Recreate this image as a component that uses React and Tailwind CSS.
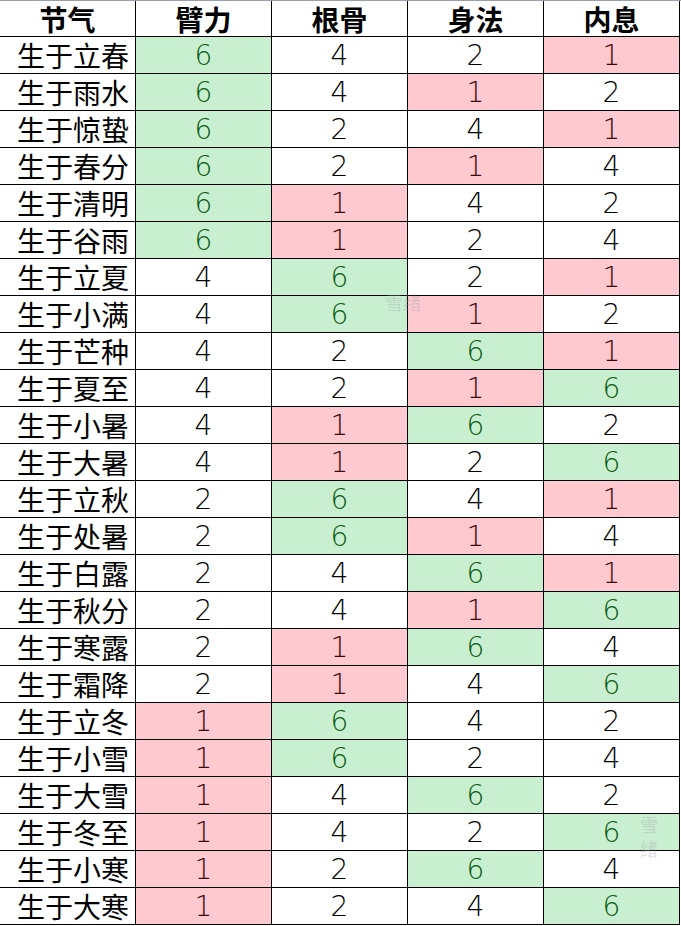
import React from 'react';

const headers = ['节气', '臂力', '根骨', '身法', '内息'];

const rows = [
  ['立春', 6, 4, 2, 1],
  ['雨水', 6, 4, 1, 2],
  ['惊蛰', 6, 2, 4, 1],
  ['春分', 6, 2, 1, 4],
  ['清明', 6, 1, 4, 2],
  ['谷雨', 6, 1, 2, 4],
  ['立夏', 4, 6, 2, 1],
  ['小满', 4, 6, 1, 2],
  ['芒种', 4, 2, 6, 1],
  ['夏至', 4, 2, 1, 6],
  ['小暑', 4, 1, 6, 2],
  ['大暑', 4, 1, 2, 6],
  ['立秋', 2, 6, 4, 1],
  ['处暑', 2, 6, 1, 4],
  ['白露', 2, 4, 6, 1],
  ['秋分', 2, 4, 1, 6],
  ['寒露', 2, 1, 6, 4],
  ['霜降', 2, 1, 4, 6],
  ['立冬', 1, 6, 4, 2],
  ['小雪', 1, 6, 2, 4],
  ['大雪', 1, 4, 6, 2],
  ['冬至', 1, 4, 2, 6],
  ['小寒', 1, 2, 6, 4],
  ['大寒', 1, 2, 4, 6],
];

function ValueCell({ value }) {
  let tone = 'bg-white text-black';
  if (value === 6) tone = 'bg-[#c9efd1] text-[#0d5a12]';
  if (value === 1) tone = 'bg-[#ffc9d0] text-[#3a080a]';
  return (
    <div
      className={`h-[37px] flex items-center justify-center pt-[2px] border-r border-b border-black text-[28px] font-extralight font-['DejaVu_Sans',sans-serif] ${tone}`}
    >
      {value}
    </div>
  );
}

export default function App() {
  return (
    <div className="relative w-[681px] h-[926px] bg-white overflow-hidden font-['Noto_Sans_CJK_SC','Noto_Sans',sans-serif]">
      <div className="grid grid-cols-[repeat(5,136px)] border-t border-gray-400">
        {headers.map(h => (
          <div
            key={h}
            className="h-[36px] flex items-center justify-center border-r border-b border-black text-[28px] font-bold text-black leading-none"
          >
            {h}
          </div>
        ))}
        {rows.map(([name, ...vals]) => (
          <React.Fragment key={name}>
            <div className="h-[37px] flex items-center justify-end pr-[6px] border-r border-b border-black text-[28px] text-black leading-none">
              生于{name}
            </div>
            {vals.map((v, i) => (
              <ValueCell key={i} value={v} />
            ))}
          </React.Fragment>
        ))}
      </div>

      {/* faint watermarks */}
      <div className="absolute left-[385px] top-[289px] text-[18px] text-gray-400 opacity-30 pointer-events-none">
        雪绪
      </div>
      <div className="absolute left-[640px] top-[812px] w-[20px] text-[18px] leading-[24px] text-gray-400 opacity-30 pointer-events-none">
        雪<br />绪
      </div>
    </div>
  );
}
